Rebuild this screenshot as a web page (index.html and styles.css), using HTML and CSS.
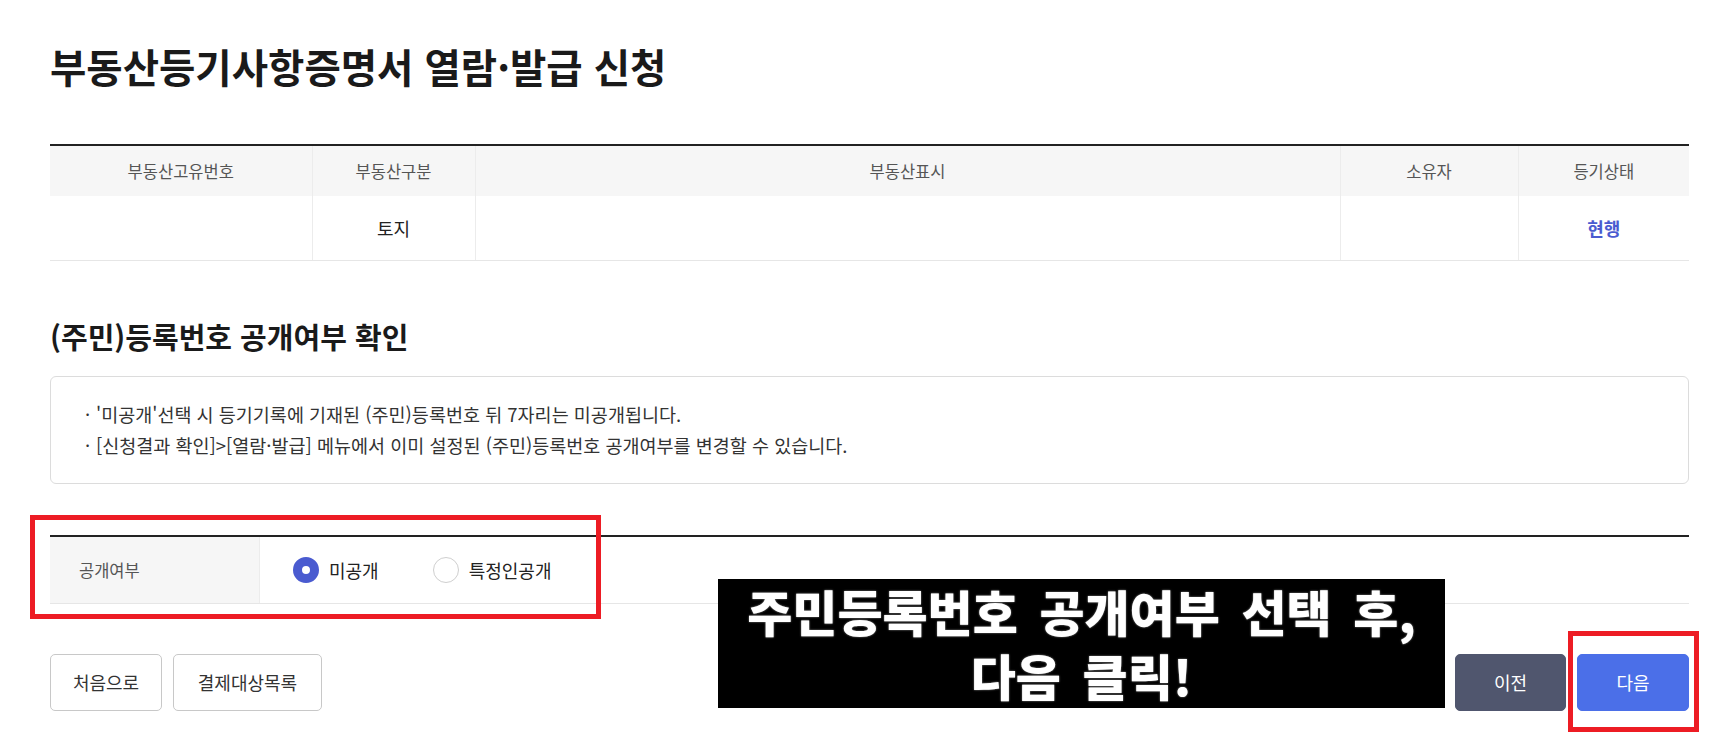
FILE: index.html
```html
<!DOCTYPE html>
<html lang="ko">
<head>
<meta charset="utf-8">
<title>부동산등기사항증명서 열람·발급 신청</title>
<link rel="stylesheet" href="styles.css">
</head>
<body>
<div class="page">
  <h1 class="title">부동산등기사항증명서 열람·발급 신청</h1>

  <table class="grid">
    <colgroup>
      <col class="c1"><col class="c2"><col class="c3"><col class="c4"><col class="c5">
    </colgroup>
    <thead>
      <tr><th>부동산고유번호</th><th>부동산구분</th><th>부동산표시</th><th>소유자</th><th>등기상태</th></tr>
    </thead>
    <tbody>
      <tr><td></td><td>토지</td><td></td><td></td><td class="status">현행</td></tr>
    </tbody>
  </table>

  <h2 class="subtitle">(주민)등록번호 공개여부 확인</h2>

  <div class="info">
    <p><span class="bullet">·</span>'미공개'선택 시 등기기록에 기재된 (주민)등록번호 뒤 7자리는 미공개됩니다.</p>
    <p><span class="bullet">·</span>[신청결과 확인]&gt;[열람·발급] 메뉴에서 이미 설정된 (주민)등록번호 공개여부를 변경할 수 있습니다.</p>
  </div>

  <div class="form-row">
    <div class="label">공개여부</div>
    <div class="options">
      <label class="radio first"><span class="dot on"></span>미공개</label>
      <label class="radio"><span class="dot"></span>특정인공개</label>
    </div>
  </div>

  <div class="actions">
    <div class="left">
      <button class="btn w1">처음으로</button>
      <button class="btn w2">결제대상목록</button>
    </div>
    <div class="right">
      <button class="btn dark w3">이전</button>
      <button class="btn primary w4">다음</button>
    </div>
  </div>

  <div class="mark mark-radio"></div>
  <div class="mark mark-next"></div>
  <div class="caption">주민등록번호 공개여부 선택 후,<br>다음 클릭!</div>
</div>
</body>
</html>
```

FILE: styles.css
```css
* { box-sizing: border-box; }
html, body { margin: 0; padding: 0; background: #fff; }
body {
  font-family: "Noto Sans CJK KR", "Noto Sans", sans-serif;
  color: #222;
}
.page {
  position: relative;
  width: 1714px;
  height: 742px;
  padding: 42px 0 0 50px;
}
.title {
  margin: 0 0 54px;
  font-size: 39.5px;
  line-height: 48px;
  font-weight: 700;
  letter-spacing: 0;
  color: #1a1a1a;
}
.grid {
  width: 1639px;
  border-collapse: collapse;
  table-layout: fixed;
  border-top: 2px solid #222;
}
.c1 { width: 262px; }
.c2 { width: 163px; }
.c3 { width: 865px; }
.c4 { width: 178px; }
.c5 { width: 171px; }
.grid th {
  height: 51px;
  background: #f6f6f6;
  font-weight: 400;
  font-size: 16.5px;
  color: #555;
  border-left: 1px solid #ececec;
  padding: 0;
}
.grid td {
  height: 64px;
  font-size: 18px;
  color: #222;
  text-align: center;
  border-left: 1px solid #ececec;
  border-bottom: 1px solid #e6e6e6;
  padding: 0;
}
.grid th:first-child, .grid td:first-child { border-left: none; }
.grid td.status { color: #4a5bd0; font-weight: 700; }

.subtitle {
  margin: 55px 0 20px;
  font-size: 29px;
  line-height: 40px;
  font-weight: 700;
  letter-spacing: 0;
  color: #1a1a1a;
}
.info {
  width: 1639px;
  border: 1px solid #dcdcdc;
  border-radius: 6px;
  padding: 22px 34px 22px;
}
.info p {
  margin: 0;
  font-size: 18.5px;
  line-height: 31px;
  color: #333;
}
.bullet {
  display: inline-block;
  width: 11px;
}
.form-row {
  margin-top: 51px;
  width: 1639px;
  display: flex;
  border-top: 2px solid #222;
  border-bottom: 1px solid #e6e6e6;
  height: 69px;
}
.label {
  width: 210px;
  background: #f6f6f6;
  border-right: 1px solid #ececec;
  display: flex;
  align-items: center;
  padding-left: 29px;
  font-size: 16.5px;
  color: #555;
}
.options {
  display: flex;
  align-items: center;
  padding-left: 33px;
}
.radio {
  display: flex;
  align-items: center;
  font-size: 18px;
  color: #222;
}
.radio.first { margin-right: 54px; }
.dot {
  width: 26px;
  height: 26px;
  border-radius: 50%;
  border: 1px solid #cfcfcf;
  background: #fff;
  margin-right: 10px;
}
.dot.on {
  border: 9px solid #4a5bd0;
}
.actions {
  margin-top: 50px;
  width: 1639px;
  display: flex;
  justify-content: space-between;
}
.left, .right { display: flex; gap: 11px; }
.btn {
  height: 57px;
  padding: 0;
  border: 1px solid #c8c8c8;
  border-radius: 5px;
  background: #fff;
  font-family: inherit;
  font-size: 18px;
  color: #333;
}
.w1 { width: 112px; }
.w2 { width: 149px; }
.w3 { width: 111px; }
.w4 { width: 112px; }
.btn.dark { background: #50566e; border-color: #50566e; color: #fff; }
.btn.primary { background: #4b6fe8; border-color: #4b6fe8; color: #fff; }

.mark {
  position: absolute;
  border: 5px solid #ed1c24;
}
.mark-radio { left: 30px; top: 515px; width: 571px; height: 104px; }
.mark-next { left: 1568px; top: 631px; width: 131px; height: 101px; }
.caption {
  position: absolute;
  left: 718px;
  top: 579px;
  width: 727px;
  height: 129px;
  background: #000;
  color: #fff;
  text-align: center;
  font-size: 49px;
  font-weight: 900;
  line-height: 64px;
  word-spacing: 8px;
  text-shadow: 0 0 2px #999;
}
```
